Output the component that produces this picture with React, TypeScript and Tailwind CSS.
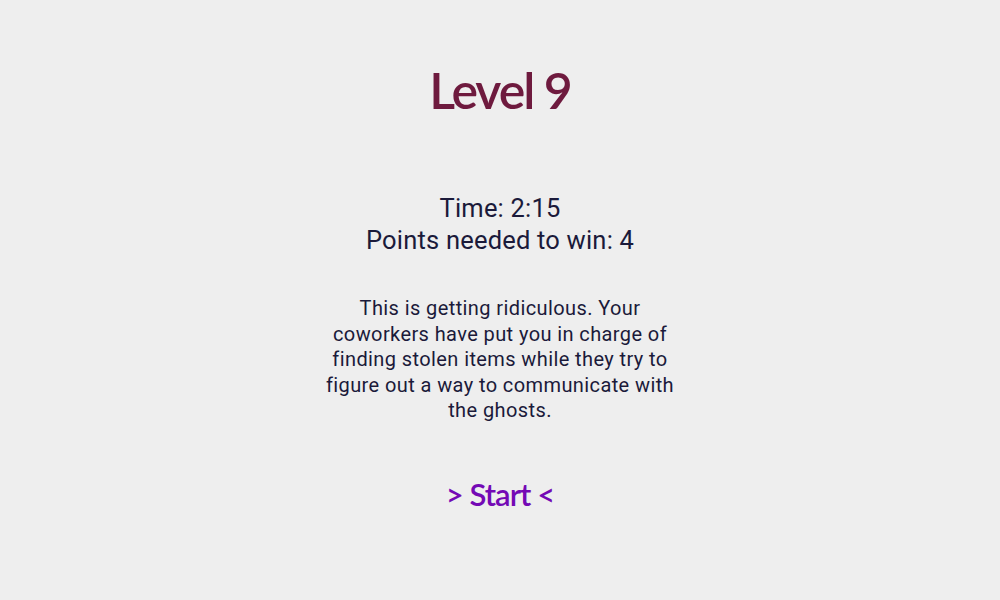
export default function App() {
  return (
    <div className="min-h-[600px] w-full bg-[#eeeeee] flex flex-col items-center text-center font-['Roboto',sans-serif]">
      <h1 className="mt-[62px] text-[50px] leading-[56px] font-semibold tracking-[-2px] text-[#6e1a3e] font-['Lato',sans-serif]">
        Level 9
      </h1>
      <div className="mt-[74px] text-[25.5px] leading-[32px] text-[#1b1a3a] tracking-[0.2px]">
        <p>Time: 2:15</p>
        <p>Points needed to win: 4</p>
      </div>
      <p className="mt-[40px] w-[350px] text-[20px] leading-[25.5px] text-[#1b1a3a] tracking-[0.4px]">
        This is getting ridiculous. Your coworkers have put you in charge of finding stolen items while they try to figure out a way to communicate with the ghosts.
      </p>
      <button className="mt-[52px] text-[31px] leading-[36px] font-semibold tracking-[-1px] text-[#7409b5] font-['Lato',sans-serif]">
        &gt; Start &lt;
      </button>
    </div>
  );
}
